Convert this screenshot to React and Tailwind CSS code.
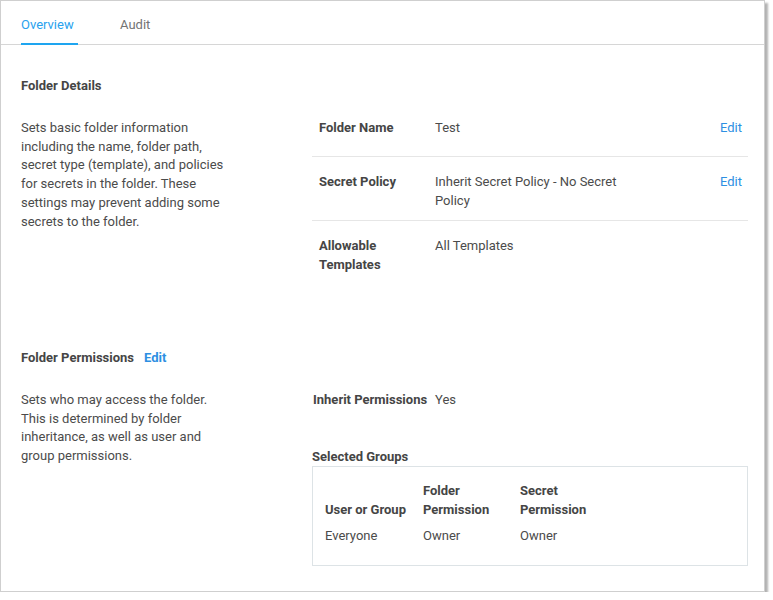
import { useState } from 'react'

const detailRows = [
  { label: 'Folder Name', value: 'Test', edit: true },
  { label: 'Secret Policy', value: 'Inherit Secret Policy - No Secret Policy', edit: true },
  { label: 'Allowable Templates', value: 'All Templates', edit: false },
]

const groups = [{ name: 'Everyone', folder: 'Owner', secret: 'Owner' }]

function Tabs() {
  const [active, setActive] = useState('Overview')
  return (
    <div className="flex h-[44px] items-stretch border-b border-[#d6d6d6] pl-[20px]">
      {['Overview', 'Audit'].map(tab => (
        <button
          key={tab}
          onClick={() => setActive(tab)}
          className={
            active === tab
              ? 'w-[57px] -mb-px border-b-2 border-[#1ea5f0] pr-[4px] text-left text-[#28a2ee] pt-[7px]'
              : 'ml-[42px] border-b-2 border-transparent text-left text-[#737373] pt-[7px]'
          }
        >
          {tab}
        </button>
      ))}
    </div>
  )
}

export default function App() {
  return (
    <div className="p-0 bg-white">
      <div
        className="w-[765px] h-[592px] border border-[#cfcfcf] bg-white shadow-[3px_3px_2px_rgba(0,0,0,0.3)] text-[13px] leading-[18.8px] text-[#4b4b4b]"
        style={{ fontFamily: 'Roboto, "Liberation Sans", sans-serif' }}
      >
        <Tabs />

        {/* Folder Details */}
        <div className="pl-[20px] pr-[16px]">
          <h2 className="mt-[32px] font-bold text-[#454545]">Folder Details</h2>
          <div className="mt-[7px] flex">
            <div className="w-[291px] shrink-0 pt-[16px]">
              <p className="w-[210px]">
                Sets basic folder information including the name, folder path, secret type (template), and policies for secrets in the folder. These settings may prevent adding some secrets to the folder.
              </p>
            </div>
            <div className="w-[436px] shrink-0">
              {detailRows.map((row, i) => (
                <div
                  key={row.label}
                  className={
                    'flex pt-[16px] pb-[10px] pl-[7px] pr-[6px] ' +
                    (i < detailRows.length - 1 ? 'border-b border-[#e6e6e6]' : '')
                  }
                >
                  <div className="w-[116px] min-h-[27px] pr-[20px] font-bold text-[#454545]">{row.label}</div>
                  <div className="w-[205px]">{row.value}</div>
                  <div className="flex-1 text-right">
                    {row.edit && <a className="text-[#2d8fe2] cursor-pointer">Edit</a>}
                  </div>
                </div>
              ))}
            </div>
          </div>
        </div>

        {/* Folder Permissions */}
        <div className="pl-[20px] pr-[16px]">
          <h2 className="mt-[64px] font-bold text-[#454545]">
            Folder Permissions
            <a className="ml-[10px] text-[#2d8fe2] cursor-pointer">Edit</a>
          </h2>
          <div className="mt-[7px] flex">
            <div className="w-[291px] shrink-0 pt-[16px]">
              <p className="w-[210px]">
                Sets who may access the folder. This is determined by folder inheritance, as well as user and group permissions.
              </p>
            </div>
            <div className="w-[436px] shrink-0 pt-[16px]">
              <div className="flex pl-[1px]">
                <span className="w-[122px] font-bold text-[#454545]">Inherit Permissions</span>
                <span>Yes</span>
              </div>
              <div className="mt-[38px] font-bold text-[#454545]">Selected Groups</div>
              <div className="h-[100px] border border-[#dde3e6] px-[12px] pt-[15px]">
                <table className="border-collapse text-left">
                  <thead>
                    <tr className="align-bottom font-bold text-[#454545]">
                      <th className="w-[98px] pb-[7px] font-bold">User or Group</th>
                      <th className="w-[97px] pb-[7px] font-bold">
                        Folder
                        <br />
                        Permission
                      </th>
                      <th className="w-[98px] pb-[7px] font-bold">
                        Secret
                        <br />
                        Permission
                      </th>
                    </tr>
                  </thead>
                  <tbody>
                    {groups.map(g => (
                      <tr key={g.name}>
                        <td>{g.name}</td>
                        <td>{g.folder}</td>
                        <td>{g.secret}</td>
                      </tr>
                    ))}
                  </tbody>
                </table>
              </div>
            </div>
          </div>
        </div>
      </div>
    </div>
  )
}
